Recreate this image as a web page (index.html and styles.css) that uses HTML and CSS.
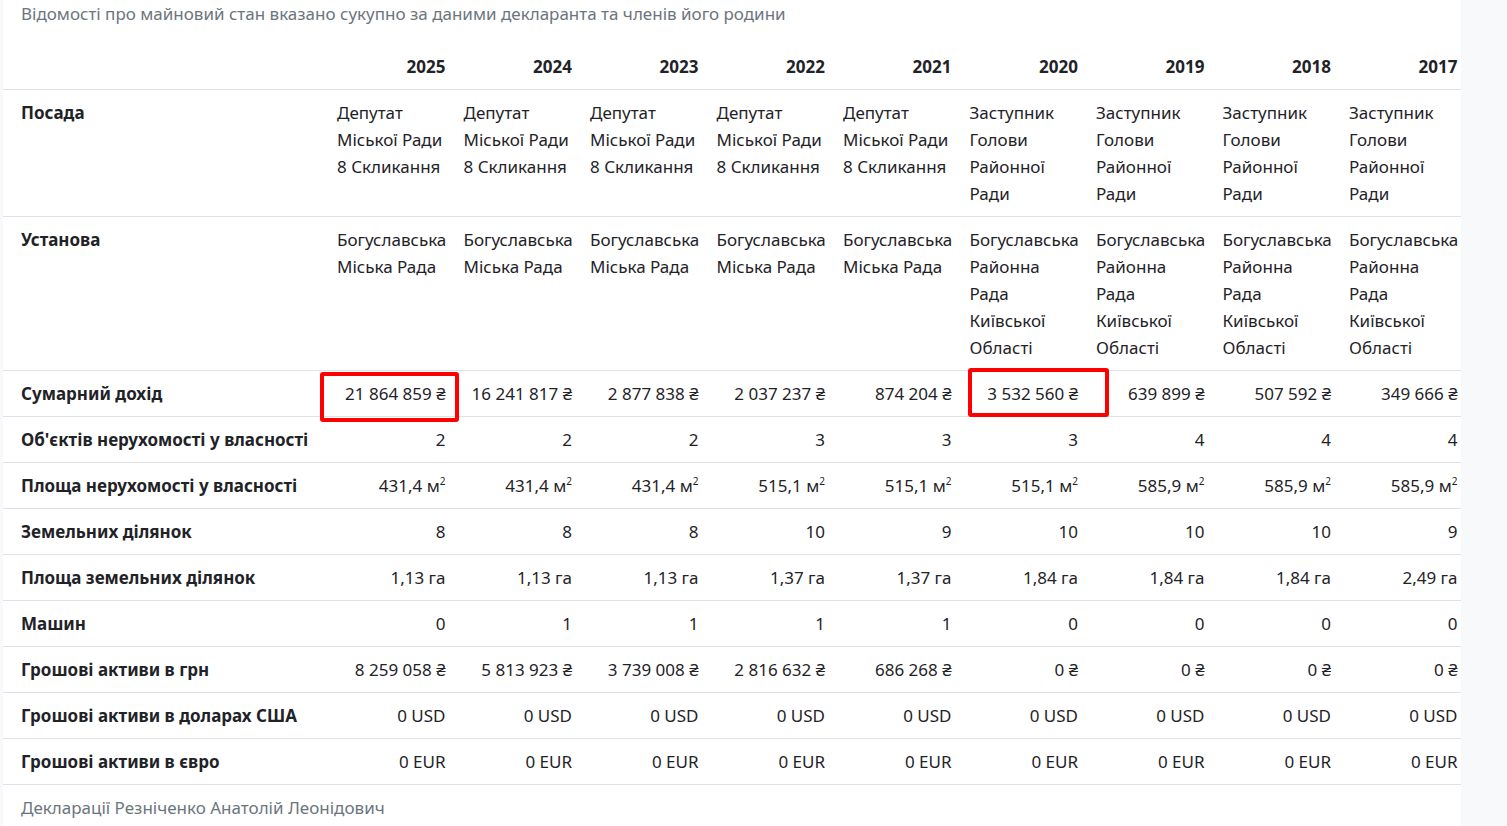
FILE: index.html
```html
<!DOCTYPE html>
<html lang="uk">
<head>
<meta charset="utf-8">
<title>Декларації</title>
<link rel="stylesheet" href="styles.css">
</head>
<body>
<div class="panel">
  <p class="note">Відомості про майновий стан вказано сукупно за даними декларанта та членів його родини</p>
  <div class="table-wrap">
    <table class="decl">
      <colgroup>
        <col class="c-label">
        <col class="c-year"><col class="c-year"><col class="c-year"><col class="c-year"><col class="c-year"><col class="c-year"><col class="c-year"><col class="c-year"><col class="c-year">
      </colgroup>
      <thead>
        <tr>
          <th></th><th>2025</th><th>2024</th><th>2023</th><th>2022</th><th>2021</th><th>2020</th><th>2019</th><th>2018</th><th>2017</th>
        </tr>
      </thead>
      <tbody>
        <tr class="text-row">
          <th>Посада</th>
          <td>Депутат Міської Ради 8 Скликання</td>
          <td>Депутат Міської Ради 8 Скликання</td>
          <td>Депутат Міської Ради 8 Скликання</td>
          <td>Депутат Міської Ради 8 Скликання</td>
          <td>Депутат Міської Ради 8 Скликання</td>
          <td>Заступник Голови Районної Ради</td>
          <td>Заступник Голови Районної Ради</td>
          <td>Заступник Голови Районної Ради</td>
          <td>Заступник Голови Районної Ради</td>
        </tr>
        <tr class="text-row">
          <th>Установа</th>
          <td>Богуславська Міська Рада</td>
          <td>Богуславська Міська Рада</td>
          <td>Богуславська Міська Рада</td>
          <td>Богуславська Міська Рада</td>
          <td>Богуславська Міська Рада</td>
          <td>Богуславська Районна Рада Київської Області</td>
          <td>Богуславська Районна Рада Київської Області</td>
          <td>Богуславська Районна Рада Київської Області</td>
          <td>Богуславська Районна Рада Київської Області</td>
        </tr>
        <tr>
          <th>Сумарний дохід</th>
          <td>21 864 859 ₴</td><td>16 241 817 ₴</td><td>2 877 838 ₴</td><td>2 037 237 ₴</td><td>874 204 ₴</td><td>3 532 560 ₴</td><td>639 899 ₴</td><td>507 592 ₴</td><td>349 666 ₴</td>
        </tr>
        <tr>
          <th>Об'єктів нерухомості у власності</th>
          <td>2</td><td>2</td><td>2</td><td>3</td><td>3</td><td>3</td><td>4</td><td>4</td><td>4</td>
        </tr>
        <tr>
          <th>Площа нерухомості у власності</th>
          <td>431,4 м<sup>2</sup></td><td>431,4 м<sup>2</sup></td><td>431,4 м<sup>2</sup></td><td>515,1 м<sup>2</sup></td><td>515,1 м<sup>2</sup></td><td>515,1 м<sup>2</sup></td><td>585,9 м<sup>2</sup></td><td>585,9 м<sup>2</sup></td><td>585,9 м<sup>2</sup></td>
        </tr>
        <tr>
          <th>Земельних ділянок</th>
          <td>8</td><td>8</td><td>8</td><td>10</td><td>9</td><td>10</td><td>10</td><td>10</td><td>9</td>
        </tr>
        <tr>
          <th>Площа земельних ділянок</th>
          <td>1,13 га</td><td>1,13 га</td><td>1,13 га</td><td>1,37 га</td><td>1,37 га</td><td>1,84 га</td><td>1,84 га</td><td>1,84 га</td><td>2,49 га</td>
        </tr>
        <tr>
          <th>Машин</th>
          <td>0</td><td>1</td><td>1</td><td>1</td><td>1</td><td>0</td><td>0</td><td>0</td><td>0</td>
        </tr>
        <tr>
          <th>Грошові активи в грн</th>
          <td>8 259 058 ₴</td><td>5 813 923 ₴</td><td>3 739 008 ₴</td><td>2 816 632 ₴</td><td>686 268 ₴</td><td>0 ₴</td><td>0 ₴</td><td>0 ₴</td><td>0 ₴</td>
        </tr>
        <tr>
          <th>Грошові активи в доларах США</th>
          <td>0 USD</td><td>0 USD</td><td>0 USD</td><td>0 USD</td><td>0 USD</td><td>0 USD</td><td>0 USD</td><td>0 USD</td><td>0 USD</td>
        </tr>
        <tr>
          <th>Грошові активи в євро</th>
          <td>0 EUR</td><td>0 EUR</td><td>0 EUR</td><td>0 EUR</td><td>0 EUR</td><td>0 EUR</td><td>0 EUR</td><td>0 EUR</td><td>0 EUR</td>
        </tr>
      </tbody>
    </table>
  </div>
  <p class="footer-note">Декларації Резніченко Анатолій Леонідович</p>
  <div class="mark mark-a"></div>
  <div class="mark mark-b"></div>
</div>
</body>
</html>
```

FILE: styles.css
```css
html, body {
  margin: 0;
  padding: 0;
  background: #f8f9fb;
}
body {
  font-family: "Noto Sans", "Open Sans", "Liberation Sans", sans-serif;
  font-size: 17px;
  color: #1f2328;
}
.panel {
  position: relative;
  margin-left: 3px;
  width: 1458px;
  min-height: 826px;
  background: #ffffff;
}
.note {
  margin: 0 0 17px 0;
  padding: 0 18px;
  line-height: 27px;
  color: #6c757d;
}
.footer-note {
  margin: 0;
  padding: 9px 18px;
  line-height: 27px;
  color: #6c757d;
}
.table-wrap {
  overflow: hidden;
  width: 1458px;
}
.decl {
  border-collapse: collapse;
  table-layout: fixed;
  width: 1463.5px;
  line-height: 27px;
}
.c-label { width: 325px; }
.c-year { width: 126.5px; }
.decl th,
.decl td {
  padding: 9px;
  vertical-align: top;
  border-bottom: 1px solid #dee2e6;
}
.decl th:first-child {
  padding-left: 18px;
}
.decl thead th {
  text-align: right;
  font-weight: 700;
}
.decl tbody th {
  text-align: left;
  font-weight: 700;
  white-space: nowrap;
}
.decl td {
  text-align: right;
  white-space: nowrap;
}
.decl .text-row td {
  text-align: left;
  white-space: normal;
}
.decl sup {
  font-size: 10px;
  line-height: 0;
  vertical-align: 7px;
}
.mark {
  position: absolute;
  border: 4px solid #ff0000;
  border-radius: 3px;
  box-sizing: border-box;
}
.mark-a {
  left: 317px;
  top: 372px;
  width: 139px;
  height: 50px;
}
.mark-b {
  left: 965px;
  top: 368px;
  width: 141px;
  height: 49px;
}
```
